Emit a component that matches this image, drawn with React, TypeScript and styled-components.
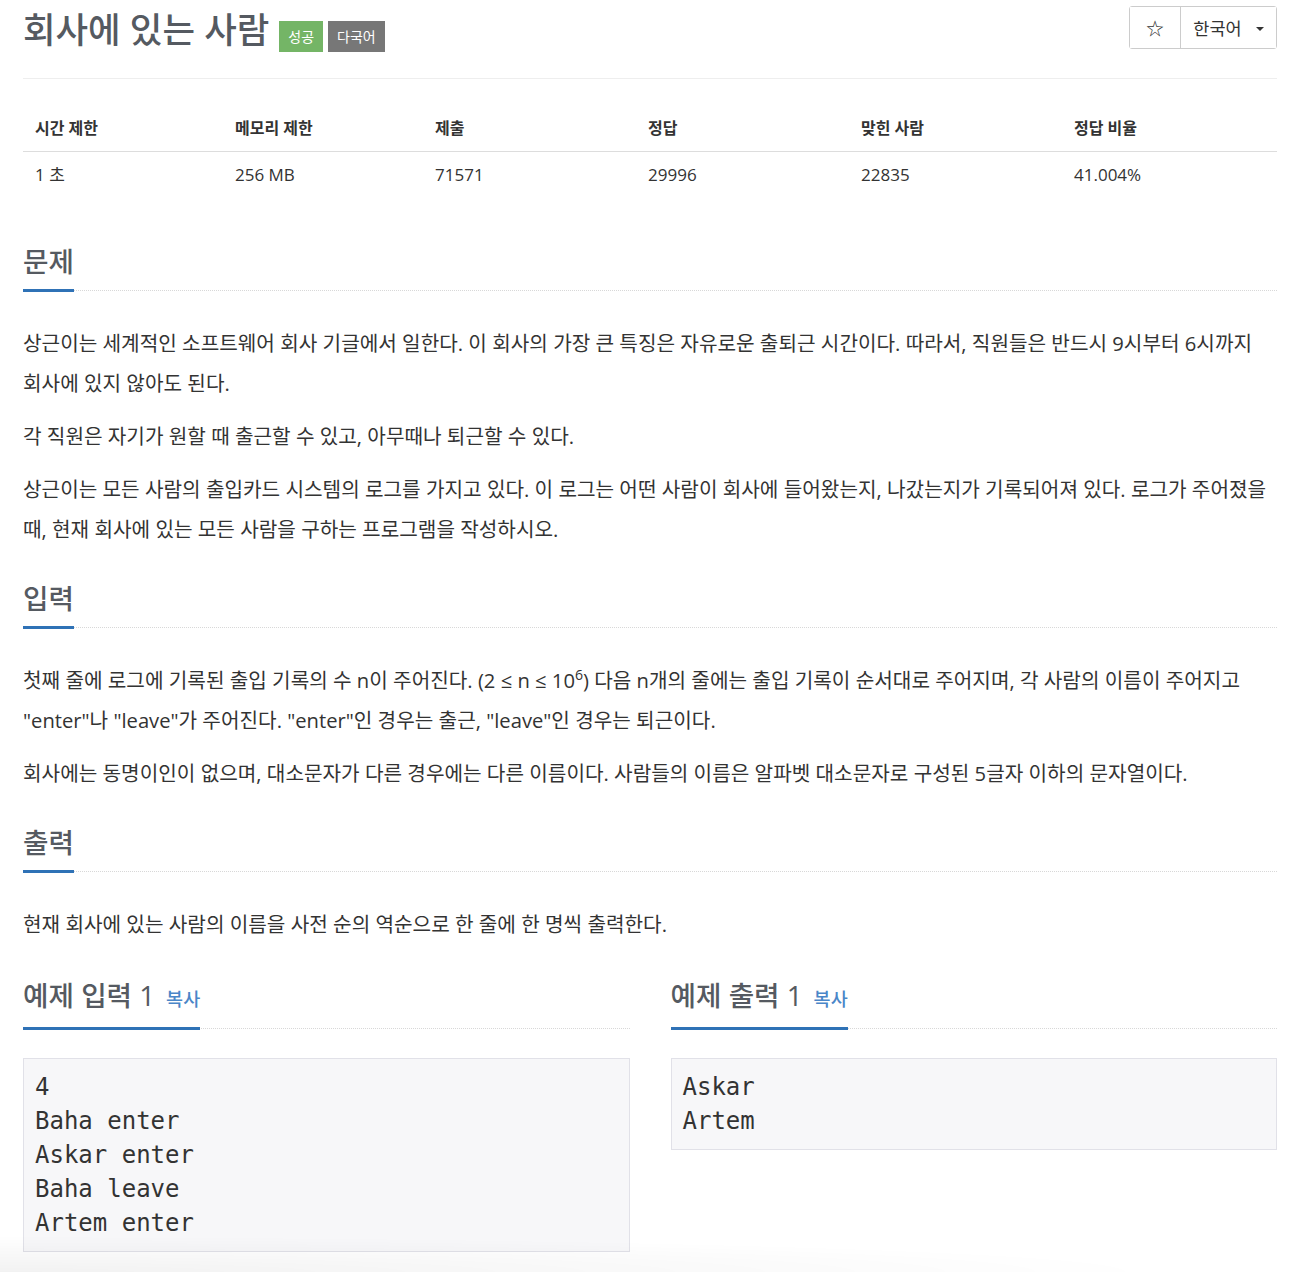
import styled, { createGlobalStyle } from "styled-components";

const GlobalStyle = createGlobalStyle`
    html, body {
        margin: 0;
        padding: 0;
        background: #fff;
    }
    body {
        font-family: "Open Sans", "Noto Sans CJK KR", sans-serif;
        color: #333;
    }
    sup {
        font-size: 70%;
        line-height: 0;
    }
`

const Page = styled.div`
    padding: 6px 23px 40px;
`

const Header = styled.div`
    display: flex;
    justify-content: space-between;
    align-items: flex-start;
    padding-bottom: 29px;
    border-bottom: 1px solid #eee;
`

const TitleRow = styled.div`
    display: flex;
    align-items: flex-end;
    gap: 5px;
    padding-top: 3px;
`

const Title = styled.h1`
    margin: 0 5px 0 0;
    font-size: 35.4px;
    font-weight: 500;
    line-height: 40px;
    color: #555a61;
`

const Badge = styled.span<{ $tone: "success" | "info" }>`
    display: inline-block;
    height: 31px;
    line-height: 31px;
    padding: 0 9px;
    margin-bottom: -3px;
    font-size: 14px;
    color: #fff;
    background: ${p => (p.$tone === "success" ? "#74b566" : "#777777")};
`

const ButtonGroup = styled.div`
    display: flex;
    height: 43px;
    border: 1px solid #ccc;
    border-radius: 3px;
    box-sizing: border-box;
`

const GroupButton = styled.button<{ $width: number }>`
    display: flex;
    align-items: center;
    justify-content: center;
    gap: 14px;
    width: ${p => p.$width}px;
    padding: 0;
    border: 0;
    background: #fff;
    font-family: inherit;
    font-size: 17.5px;
    color: #333;
    & + & {
        border-left: 1px solid #ccc;
    }
`

const Caret = styled.span`
    width: 0;
    height: 0;
    border-left: 4px solid transparent;
    border-right: 4px solid transparent;
    border-top: 4px solid #333;
    margin-top: 2px;
`

const InfoTable = styled.table`
    width: 100%;
    margin: 26px 0 46px;
    border-collapse: collapse;

    th, td {
        padding: 12px;
        line-height: 22px;
        text-align: left;
    }
    th {
        font-size: 16px;
        font-weight: 700;
        border-bottom: 1px solid #ddd;
    }
    td {
        font-size: 17px;
    }
`

const Section = styled.section<{ $gap?: number }>`
    margin-top: ${p => p.$gap ?? 32}px;
`

const HeadlineWrap = styled.div`
    border-bottom: 1px dotted #d8d8d8;
    margin-bottom: 32px;
`

const Headline = styled.h2`
    display: inline-flex;
    align-items: baseline;
    gap: 11px;
    margin: 0 0 -2px;
    padding-bottom: 11px;
    font-size: 27.7px;
    font-weight: 500;
    line-height: 34px;
    color: #555a61;
    border-bottom: 3px solid #2f72b6;
`

const CopyLink = styled.a`
    font-size: 18.5px;
    color: #4a86c8;
    text-decoration: none;
`

const Paragraph = styled.p`
    margin: 0 0 13px;
    font-size: 20.2px;
    line-height: 40px;
    word-break: keep-all;
`

const Samples = styled.div`
    display: grid;
    grid-template-columns: 1fr 1fr;
    gap: 41px;
    align-items: start;
`

const SampleBox = styled.pre`
    margin: -3px 0 0;
    padding: 11px;
    border: 1px solid #e1e1e8;
    background: #f7f7f9;
    font-family: "DejaVu Sans Mono", monospace;
    font-size: 24px;
    line-height: 34px;
    color: #333;
`

const BottomFade = styled.div`
    position: fixed;
    left: 0;
    right: 0;
    bottom: 0;
    height: 36px;
    pointer-events: none;
    background: radial-gradient(ellipse 90% 100% at 0% 100%, rgba(0, 0, 0, 0.05), rgba(0, 0, 0, 0) 100%);
`

const stats = [
    { label: "시간 제한", value: "1 초", width: 200 },
    { label: "메모리 제한", value: "256 MB", width: 200 },
    { label: "제출", value: "71571", width: 213 },
    { label: "정답", value: "29996", width: 213 },
    { label: "맞힌 사람", value: "22835", width: 213 },
    { label: "정답 비율", value: "41.004%", width: 215 },
]

function SectionTitle(props: { children: React.ReactNode; copy?: boolean }) {
    return (
        <HeadlineWrap>
            <Headline>
                {props.children}
                {props.copy && <CopyLink href="#">복사</CopyLink>}
            </Headline>
        </HeadlineWrap>
    )
}

function App() {
    return (
        <Page>
            <GlobalStyle />
            <Header>
                <TitleRow>
                    <Title>회사에 있는 사람</Title>
                    <Badge $tone="success">성공</Badge>
                    <Badge $tone="info">다국어</Badge>
                </TitleRow>
                <ButtonGroup>
                    <GroupButton $width={50}>☆</GroupButton>
                    <GroupButton $width={96}>
                        한국어 <Caret />
                    </GroupButton>
                </ButtonGroup>
            </Header>

            <InfoTable>
                <colgroup>
                    {stats.map(s => <col key={s.label} style={{ width: s.width }} />)}
                </colgroup>
                <thead>
                    <tr>
                        {stats.map(s => <th key={s.label}>{s.label}</th>)}
                    </tr>
                </thead>
                <tbody>
                    <tr>
                        {stats.map(s => <td key={s.label}>{s.value}</td>)}
                    </tr>
                </tbody>
            </InfoTable>

            <Section>
                <SectionTitle>문제</SectionTitle>
                <Paragraph>상근이는 세계적인 소프트웨어 회사 기글에서 일한다. 이 회사의 가장 큰 특징은 자유로운 출퇴근 시간이다. 따라서, 직원들은 반드시 9시부터 6시까지 회사에 있지 않아도 된다.</Paragraph>
                <Paragraph>각 직원은 자기가 원할 때 출근할 수 있고, 아무때나 퇴근할 수 있다.</Paragraph>
                <Paragraph>상근이는 모든 사람의 출입카드 시스템의 로그를 가지고 있다. 이 로그는 어떤 사람이 회사에 들어왔는지, 나갔는지가 기록되어져 있다. 로그가 주어졌을 때, 현재 회사에 있는 모든 사람을 구하는 프로그램을 작성하시오.</Paragraph>
            </Section>

            <Section>
                <SectionTitle>입력</SectionTitle>
                <Paragraph>첫째 줄에 로그에 기록된 출입 기록의 수 n이 주어진다. (2 ≤ n ≤ 10<sup>6</sup>) 다음 n개의 줄에는 출입 기록이 순서대로 주어지며, 각 사람의 이름이 주어지고 "enter"나 "leave"가 주어진다. "enter"인 경우는 출근, "leave"인 경우는 퇴근이다.</Paragraph>
                <Paragraph>회사에는 동명이인이 없으며, 대소문자가 다른 경우에는 다른 이름이다. 사람들의 이름은 알파벳 대소문자로 구성된 5글자 이하의 문자열이다.</Paragraph>
            </Section>

            <Section>
                <SectionTitle>출력</SectionTitle>
                <Paragraph>현재 회사에 있는 사람의 이름을 사전 순의 역순으로 한 줄에 한 명씩 출력한다.</Paragraph>
            </Section>

            <Section $gap={34}>
                <Samples>
                    <div>
                        <SectionTitle copy>예제 입력 1</SectionTitle>
                        <SampleBox>{"4\nBaha enter\nAskar enter\nBaha leave\nArtem enter"}</SampleBox>
                    </div>
                    <div>
                        <SectionTitle copy>예제 출력 1</SectionTitle>
                        <SampleBox>{"Askar\nArtem"}</SampleBox>
                    </div>
                </Samples>
            </Section>
            <BottomFade />
        </Page>
    )
}

export default App
